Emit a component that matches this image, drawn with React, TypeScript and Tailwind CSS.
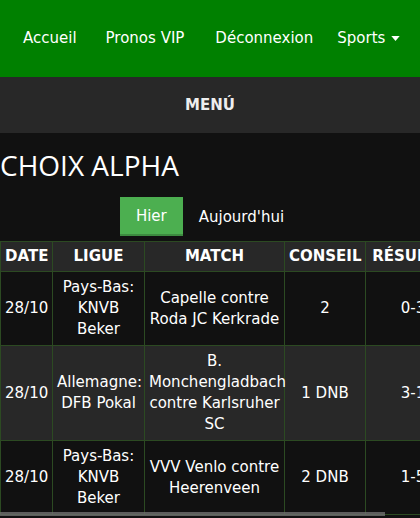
import React from "react";

const rows = [
  {
    date: "28/10",
    league: "Pays-Bas: KNVB Beker",
    match: "Capelle contre Roda JC Kerkrade",
    tip: "2",
    result: "0-3",
  },
  {
    date: "28/10",
    league: "Allemagne: DFB Pokal",
    match: "B. Monchengladbach contre Karlsruher SC",
    tip: "1 DNB",
    result: "3-1",
  },
  {
    date: "28/10",
    league: "Pays-Bas: KNVB Beker",
    match: "VVV Venlo contre Heerenveen",
    tip: "2 DNB",
    result: "1-5",
  },
];

const cell = "border border-[#2c4a22] px-1 text-center align-middle";

export default function App() {
  return (
    <div className="min-h-[518px] bg-[#111111] font-['DejaVu_Sans',Verdana,sans-serif] text-[15px] text-white">
      <nav className="flex h-[77px] items-center bg-[#008000] pl-[23px]">
        <a className="mr-[29px]">Accueil</a>
        <a className="mr-[31px]">Pronos VIP</a>
        <a className="mr-[24px]">Déconnexion</a>
        <a className="flex items-center">
          Sports
          <svg viewBox="0 0 10 6" className="ml-[6px] h-[5px] w-[9px]" fill="currentColor">
            <path d="M0 0h10L5 6z" />
          </svg>
        </a>
      </nav>

      <div className="flex h-[56px] items-center justify-center bg-[#282828] font-bold text-[#eeeeee]">
        MENÚ
      </div>

      <h1 className="mt-[10px] h-[44px] font-['Open_Sans',sans-serif] text-[28px] leading-[44px]">
        CHOIX ALPHA
      </h1>

      <div className="mt-[10px] flex justify-center">
        <button className="h-[39px] border-b-2 border-[#3d8b40] bg-[#4caf50] px-4 pt-[2px] text-white">
          Hier
        </button>
        <button className="h-[39px] px-4 pt-[2px] text-white">Aujourd'hui</button>
      </div>

      <div className="relative mt-[5px] overflow-hidden pb-[4px]">
        <table className="w-[460px] table-fixed border-collapse">
          <colgroup>
            <col className="w-[52px]" />
            <col className="w-[92px]" />
            <col className="w-[140px]" />
            <col className="w-[81px]" />
            <col className="w-[95px]" />
          </colgroup>
          <thead>
            <tr className="bg-[#282828] font-bold leading-[21px]">
              <th className={`${cell} py-[4px]`}>DATE</th>
              <th className={`${cell} py-[4px]`}>LIGUE</th>
              <th className={`${cell} py-[4px]`}>MATCH</th>
              <th className={`${cell} py-[4px]`}>CONSEIL</th>
              <th className={`${cell} py-[4px]`}>RÉSULTAT</th>
            </tr>
          </thead>
          <tbody className="leading-[21px]">
            {rows.map((r, i) => (
              <tr key={i} className={i % 2 === 1 ? "bg-[#282828]" : "bg-[#111111]"}>
                <td className={`${cell} py-[5px]`}>{r.date}</td>
                <td className={`${cell} py-[5px]`}>{r.league}</td>
                <td className={`${cell} py-[5px]`}>{r.match}</td>
                <td className={`${cell} py-[5px]`}>{r.tip}</td>
                <td className={`${cell} py-[5px]`}>{r.result}</td>
              </tr>
            ))}
          </tbody>
        </table>
        <div className="absolute bottom-[3px] left-0 h-[4px] w-[385px] bg-[#707070]/80" />
      </div>
    </div>
  );
}
